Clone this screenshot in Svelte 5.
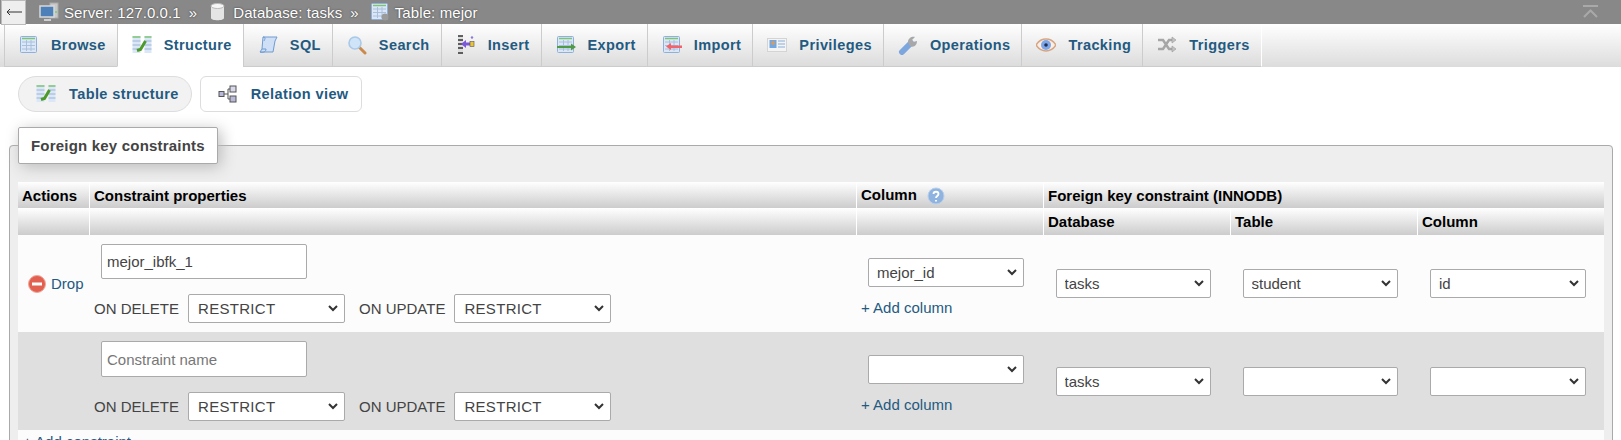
<script>
  const tabs = [
    { label: 'Browse', icon: 'table' },
    { label: 'Structure', icon: 'structure', active: true },
    { label: 'SQL', icon: 'sql' },
    { label: 'Search', icon: 'search' },
    { label: 'Insert', icon: 'insert' },
    { label: 'Export', icon: 'export' },
    { label: 'Import', icon: 'import' },
    { label: 'Privileges', icon: 'privileges' },
    { label: 'Operations', icon: 'operations' },
    { label: 'Tracking', icon: 'tracking' },
    { label: 'Triggers', icon: 'triggers' }
  ];

  const rows = [
    { name: 'mejor_ibfk_1', column: 'mejor_id', table: 'student', refColumn: 'id', drop: true },
    { name: '', column: '', table: '', refColumn: '', drop: false }
  ];
</script>

{#snippet grid()}
  <rect x="1.5" y="1.5" width="16" height="16" rx="1" fill="#dbe7f6" stroke="#8fb0d8" />
  <path d="M3 3.500h13" stroke="#7cc576" stroke-width="1.5" />
  <path d="M3 7h13M3 10.500h13M3 14h13M7.500 5v11M12 5v11" stroke="#a9c0dc" stroke-width="1" />
{/snippet}

{#snippet icon(name)}
  <svg class="ico" viewBox="0 0 20 20" aria-hidden="true">
    {#if name === 'table'}
      {@render grid()}
    {:else if name === 'structure'}
      <rect x="0.500" y="1" width="8" height="17" fill="#dbe7f6" />
      <rect x="12.500" y="1" width="7" height="17" fill="#dbe7f6" />
      <path d="M0.500 2h8M12.500 2h7" stroke="#7cc576" stroke-width="1.5" />
      <path d="M0.500 6h8M0.500 10h8M0.500 14h8M12.500 6h7M12.500 10h7M12.500 14h7" stroke="#9ab5d6" />
      <path d="M5 15.500l3.500-1 5-8.500" fill="none" stroke="#4c9a2a" stroke-width="3" />
    {:else if name === 'sql'}
      <path d="M5 2h14l-2 4-2 11H2l2-3z" fill="#cfe0f6" stroke="#6f9bd1" />
      <path d="M5 2c3 0 2 2 1 4M2 17c3 1 6 0 6-3H4" fill="none" stroke="#6f9bd1" />
    {:else if name === 'search'}
      <path d="M12 12l6 6" stroke="#c98a4b" stroke-width="3" stroke-linecap="round" />
      <circle cx="8" cy="8" r="6" fill="#cfe4f8" stroke="#a9c9e8" stroke-width="1.6" />
    {:else if name === 'insert'}
      <path d="M2 1h5v18H2" fill="#ddd" />
      <path d="M2 1h5M2 5h5M2 9h5M2 13h5M2 18h5" stroke="#333" stroke-width="1.3" />
      <path d="M5 9l5-4v2.500h4v3h-4V13z" fill="#7a5ad6" />
      <rect x="14" y="6.500" width="4" height="5" fill="#e8c33c" stroke="#555" stroke-width=".6" />
      <circle cx="16" cy="2.500" r="1.200" fill="#8a7adf" />
    {:else if name === 'export'}
      {@render grid()}
      <path d="M1 11h14V8.500l5 3.500-5 3.500V13H1z" fill="#4f9a45" />
    {:else if name === 'import'}
      {@render grid()}
      <path d="M20 10.500H9V8l-5 3.500L9 15v-2h11z" fill="#f0656b" />
    {:else if name === 'privileges'}
      <rect x="0.500" y="3.500" width="19" height="13" fill="#f4f4f4" stroke="#d4d4d4" />
      <rect x="2.500" y="5" width="7" height="8" fill="#6fa8e6" />
      <circle cx="6" cy="8" r="2" fill="#d99a5b" />
      <path d="M11 6h7M11 9h7M11 12h7" stroke="#aac4e2" stroke-width="1.500" />
    {:else if name === 'operations'}
      <path d="M4 17L13 8" stroke="#7ea6de" stroke-width="6" stroke-linecap="round" />
      <path d="M10 7c0-4 4-6 7-5l-3 3 1 2 4-1c0 4-3 7-7 5z" fill="#a8a8a8" />
    {:else if name === 'tracking'}
      <path d="M0 10c5-8 15-8 20 0-5 8-15 8-20 0z" fill="#fbeee3" stroke="#d5a584" stroke-width="1.500" />
      <circle cx="10" cy="10" r="5" fill="#7ea6e6" />
      <circle cx="10" cy="10" r="1.800" fill="#1d2f55" />
    {:else if name === 'triggers'}
      <path d="M1 5h5l6 9h4M1 14h5l6-9h4" fill="none" stroke="#a6a6a6" stroke-width="2.500" />
      <path d="M15 2l4 3-4 3zM15 11l4 3-4 3z" fill="#c2c2c2" stroke="#999" stroke-width=".6" />
    {:else if name === 'relation'}
      <path d="M5 10h5M10 5v10M10 5h2M10 15h2" stroke="#555" />
      <rect x="1" y="7.500" width="5" height="5" fill="#b8b8d8" stroke="#555" />
      <rect x="12" y="2" width="6" height="6" fill="#d8d8e8" stroke="#555" />
      <rect x="12" y="12" width="6" height="6" fill="#b8b8d8" stroke="#555" />
    {:else if name === 'server'}
      <rect x="11" y="1" width="8" height="15" fill="#c8c8c8" stroke="#aaa" />
      <rect x="1" y="4" width="14" height="11" fill="#4d7fb8" stroke="#d8d8d8" stroke-width="1.500" />
      <path d="M5 18h7" stroke="#cfcfcf" stroke-width="2" />
      <circle cx="17" cy="10" r="1" fill="#6fd06f" />
    {:else if name === 'database'}
      <path d="M3 4v12c0 3 13 3 13 0V4z" fill="#e4e4e4" />
      <ellipse cx="9.500" cy="4" rx="6.500" ry="2.500" fill="#f6f6f6" stroke="#bbb" />
    {:else if name === 'tableSmall'}
      {@render grid()}
      <circle cx="15" cy="15" r="3.500" fill="#9a9a9a" />
    {/if}
  </svg>
{/snippet}

<div class="topbar">
  <button class="back" aria-label="Back">
    <svg viewBox="0 0 16 8" aria-hidden="true">
      <path d="M1 4h15M4 1L1 4l3 3" fill="none" stroke="#333" />
    </svg>
  </button>
  <div class="crumb server">{@render icon('server')}<span>Server: 127.0.0.1</span></div>
  <span class="sep">»</span>
  <div class="crumb">{@render icon('database')}<span>Database: tasks</span></div>
  <span class="sep">»</span>
  <div class="crumb">{@render icon('tableSmall')}<span>Table: mejor</span></div>
  <svg class="collapse" viewBox="0 0 15 15" aria-hidden="true">
    <path d="M0 1h15M1 12l6.500-6.500L14 12" fill="none" stroke="#a9a9a9" stroke-width="2" />
  </svg>
</div>

<nav class="tabs">
  {#each tabs as tab}
    <a class="tab" class:active={tab.active} href="#top">
      {@render icon(tab.icon)}
      <span>{tab.label}</span>
    </a>
  {/each}
</nav>

<div class="subnav">
  <a class="pill current" href="#top">{@render icon('structure')}<span>Table structure</span></a>
  <a class="pill" href="#top">{@render icon('relation')}<span>Relation view</span></a>
</div>

<fieldset class="box">
  <legend>Foreign key constraints</legend>
  <table>
    <colgroup>
      <col class="c-actions" />
      <col class="c-props" />
      <col class="c-ref" />
      <col class="c-ref" />
      <col class="c-ref" />
      <col />
    </colgroup>
    <thead>
      <tr>
        <th>Actions</th>
        <th>Constraint properties</th>
        <th>
          Column
          <svg class="help" viewBox="0 0 18 18" aria-hidden="true">
            <circle cx="9" cy="9" r="8" fill="#8fb3df" stroke="#b9cfeb" />
            <path d="M6.500 7c0-3 5-3 5 0 0 2-2.500 2-2.500 4M9 13v1.500" fill="none" stroke="#fff" stroke-width="1.800" />
          </svg>
        </th>
        <th colspan="3">Foreign key constraint (INNODB)</th>
      </tr>
      <tr>
        <th></th>
        <th></th>
        <th></th>
        <th>Database</th>
        <th>Table</th>
        <th>Column</th>
      </tr>
    </thead>
    <tbody>
      {#each rows as row}
        <tr class:even={!row.drop}>
          <td class="actions">
            {#if row.drop}
              <a class="drop" href="#top">
                <svg class="drop-ico" viewBox="0 0 18 18" aria-hidden="true">
                  <circle cx="9" cy="9" r="8.500" fill="#e2604f" stroke="#efa69a" />
                  <rect x="4" y="7.500" width="10" height="3" fill="#fff" />
                </svg>
                Drop
              </a>
            {/if}
          </td>
          <td class="props">
            <input class="name" type="text" value={row.name} placeholder="Constraint name" />
            <div class="rules">
              <span>ON DELETE</span>
              <select class="rule"><option>RESTRICT</option></select>
              <span class="second">ON UPDATE</span>
              <select class="rule"><option>RESTRICT</option></select>
            </div>
          </td>
          <td class="col">
            <select class="own"><option>{row.column}</option></select>
            <a class="add" href="#top">+ Add column</a>
          </td>
          <td class="ref"><select><option>tasks</option></select></td>
          <td class="ref"><select><option>{row.table}</option></select></td>
          <td class="ref last"><select><option>{row.refColumn}</option></select></td>
        </tr>
      {/each}
      <tr>
        <td class="foot" colspan="6"><a class="add" href="#top">+ Add constraint</a></td>
      </tr>
    </tbody>
  </table>
</fieldset>

<style>
  :global(body) {
    margin: 0;
    height: 440px;
    overflow: hidden;
    background: #fff;
    font-family: "Liberation Sans", Arial, sans-serif;
    font-size: 15px;
    color: #444;
  }

  a {
    text-decoration: none;
    color: #235a81;
  }

  .ico {
    width: 20px;
    height: 20px;
    flex: none;
  }

  /* Top breadcrumb */
  .topbar {
    height: 24px;
    background: #888;
    display: flex;
    align-items: center;
    position: relative;
    color: #fff;
    font-size: 15px;
    letter-spacing: .1px;
    text-shadow: 0 0 2px #333;
  }

  .back {
    width: 25px;
    height: 25px;
    margin-left: 1px;
    padding: 0 4px;
    box-sizing: border-box;
    background: #eee;
    border: 1px solid #bbb;
    position: relative;
    z-index: 1;
  }

  .back svg {
    display: block;
    width: 16px;
    height: 8px;
  }

  .crumb {
    display: flex;
    align-items: center;
    gap: 5px;
  }

  .crumb.server {
    margin-left: 13px;
  }

  .sep {
    margin: 0 11px 0 8px;
  }

  .collapse {
    position: absolute;
    right: 23px;
    top: 5px;
    width: 15px;
    height: 15px;
  }

  /* Tabs */
  .tabs {
    display: flex;
    height: 43px;
    padding-left: 5px;
    background: linear-gradient(#fff, #dcdcdc);
  }

  .tab {
    display: flex;
    align-items: center;
    gap: 12px;
    padding: 0 11px 0 14px;
    border-right: 1px solid #fff;
    border-left: 1px solid #ccc;
    border-bottom: 1px solid #ccc;
    margin-left: -1px;
    font-weight: bold;
    font-size: 14.5px;
    letter-spacing: .4px;
    background: linear-gradient(#fff, #dcdcdc);
  }

  .tab.active {
    background: #fff;
    border-bottom-color: #fff;
    border-right-color: #ccc;
  }

  /* Sub navigation */
  .subnav {
    display: flex;
    gap: 8px;
    padding: 9px 0 0 18px;
  }

  .pill {
    display: flex;
    align-items: center;
    gap: 13px;
    height: 36px;
    box-sizing: border-box;
    padding: 0 12px 0 17px;
    background: #fff;
    border: 1px solid #ddd;
    border-radius: 6px;
    font-weight: bold;
    font-size: 14.5px;
    letter-spacing: .4px;
  }

  .pill.current {
    background: #f2f2f2;
    border-radius: 18px;
  }

  /* Fieldset */
  .box {
    margin: 15px 0 0 9px;
    width: 1604px;
    box-sizing: border-box;
    padding: 14px 8px 8px;
    background: #eee;
    border: 1px solid #aaa;
    border-radius: 4px 4px 0 0;
  }

  legend {
    padding: 9px 12px;
    height: 37px;
    margin-bottom: 4px;
    box-sizing: border-box;
    background: #fff;
    border: 1px solid #aaa;
    border-radius: 2px;
    box-shadow: 3px 3px 15px #bbb;
    color: #444;
    font-weight: bold;
    font-size: 15px;
    letter-spacing: .2px;
    line-height: 18px;
  }

  /* Table */
  table {
    width: 1586px;
    table-layout: fixed;
    border-collapse: separate;
    border-spacing: 0;
    color: #444;
  }

  .c-actions { width: 72px; }
  .c-props { width: 767px; }
  .c-ref { width: 187px; }

  th {
    height: 26px;
    padding: 0 4px;
    box-sizing: border-box;
    text-align: left;
    color: #000;
    font-weight: bold;
    font-size: 15px;
    background: linear-gradient(#fff, #ccc);
    border-right: 1px solid #fff;
    white-space: nowrap;
  }

  thead tr:nth-child(2) th {
    height: 27px;
  }

  th:last-child {
    border-right: 0;
  }

  .help {
    width: 18px;
    height: 18px;
    margin-left: 6px;
    vertical-align: -5px;
  }

  tbody tr {
    background: #fcfcfc;
  }

  tbody tr.even {
    background: #dfdfdf;
  }

  td {
    padding: 0;
    vertical-align: middle;
  }

  .actions {
    padding-left: 10px;
  }

  .drop {
    display: flex;
    align-items: center;
    gap: 5px;
  }

  .drop-ico {
    width: 18px;
    height: 18px;
  }

  .props {
    padding: 9px 4px;
    height: 97px;
    box-sizing: border-box;
  }

  .name {
    display: block;
    margin-left: 7px;
    width: 206px;
    height: 35px;
    box-sizing: border-box;
    padding: 0 5px;
    font: inherit;
    color: #444;
    background: #fff;
    border: 1px solid #aaa;
    border-radius: 2px;
  }

  .even .name {
    height: 36px;
  }

  .name::placeholder {
    color: #777;
  }

  .rules {
    display: flex;
    align-items: center;
    gap: 9px;
    margin-top: 15px;
  }

  .rules .second {
    margin-left: 5px;
  }

  select {
    appearance: none;
    width: 155.5px;
    height: 29px;
    box-sizing: border-box;
    padding: 0 6px;
    font: inherit;
    color: #444;
    background: #fff url("data:image/svg+xml,%3Csvg xmlns='http://www.w3.org/2000/svg' width='10' height='7'%3E%3Cpath d='M1 1l4 4 4-4' fill='none' stroke='%23333' stroke-width='2'/%3E%3C/svg%3E") no-repeat right 6px center;
    border: 1px solid #aaa;
    border-radius: 2px;
  }

  .rule {
    width: 157px;
    padding-left: 9px;
    letter-spacing: .3px;
  }

  .col {
    padding: 6px 0 0 4px;
  }

  .own {
    display: block;
    margin-left: 7px;
    padding-left: 8px;
  }

  .add {
    display: block;
    margin-top: 12px;
    font-size: 15px;
  }

  .ref {
    padding-left: 11.5px;
  }

  .ref select {
    padding-left: 8px;
  }

  .ref.last {
    padding-left: 12px;
  }

  .foot {
    padding: 3px 5px;
  }

  .foot .add {
    margin: 0;
  }
</style>
